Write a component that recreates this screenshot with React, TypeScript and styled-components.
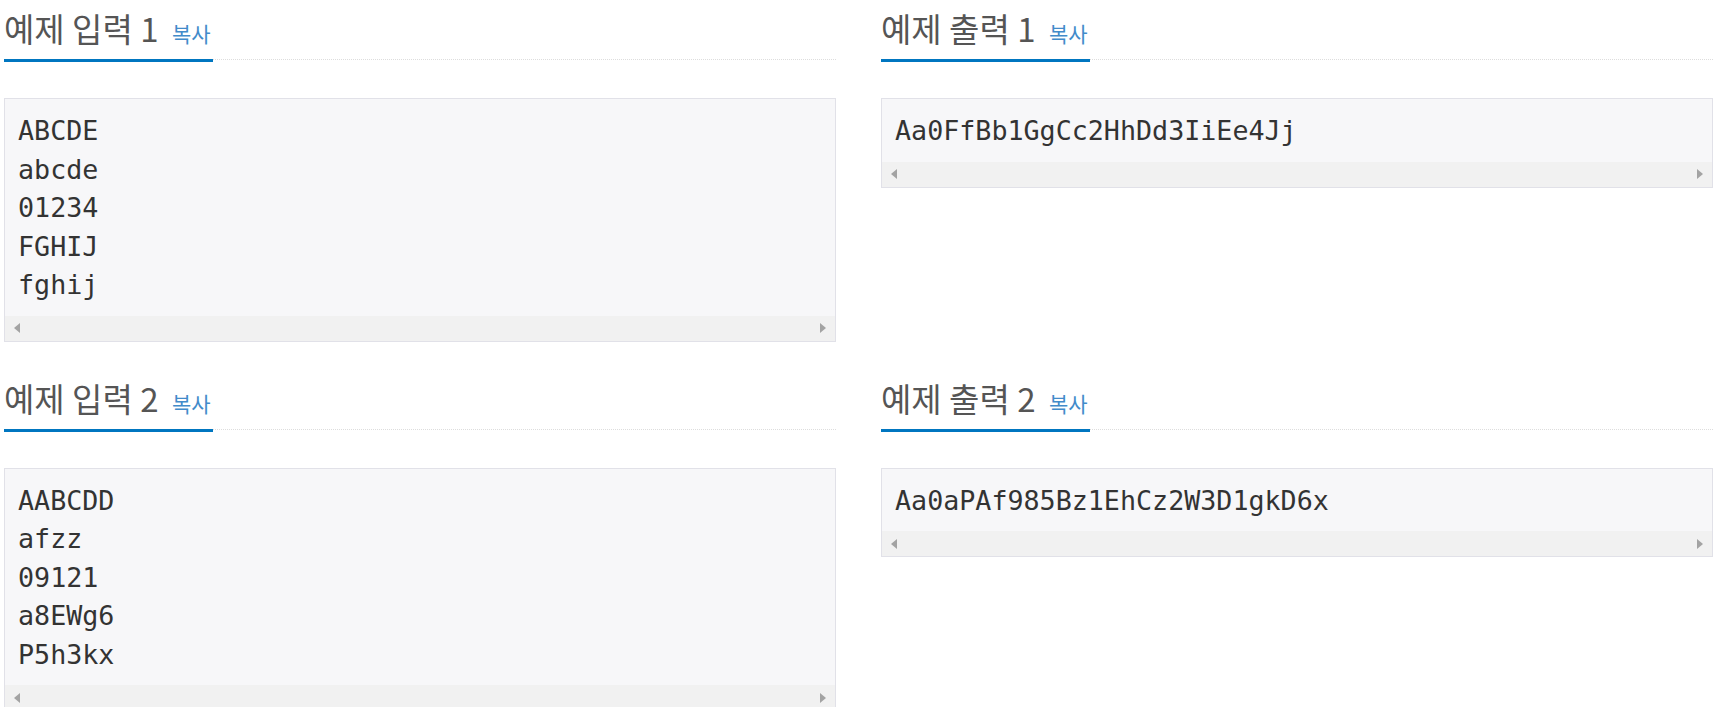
import React from "react";
import styled, { createGlobalStyle } from "styled-components";

const GlobalStyle = createGlobalStyle`
  html, body {
    margin: 0;
    padding: 0;
    background: #ffffff;
  }
  body {
    font-family: "Noto Sans CJK KR", "Noto Sans", sans-serif;
  }
`;

const Page = styled.div`
  display: grid;
  grid-template-columns: 832px 832px;
  column-gap: 45px;
  row-gap: 28px;
  padding: 0 4px;
  align-items: start;
`;

const Section = styled.section`
  display: flex;
  flex-direction: column;
  gap: 38px;
  min-width: 0;
`;

const Headline = styled.div`
  display: flex;
  align-items: flex-end;
  border-bottom: 1px dotted #dddddd;
`;

const Title = styled.h2`
  margin: 0 0 -3px;
  padding: 4px 0 7px;
  font-family: "Noto Sans CJK KR", "Noto Sans", sans-serif;
  font-size: 33px;
  font-weight: 400;
  line-height: 48px;
  color: #555555;
  border-bottom: 3px solid #0076c0;
  white-space: nowrap;
`;

const CopyButton = styled.span`
  margin-left: 6px;
  padding-right: 2px;
  font-size: 21px;
  line-height: 21px;
  color: #428bca;
  cursor: pointer;
`;

const SampleBox = styled.div`
  background: #f7f7f9;
  border: 1px solid #e1e1e8;
  overflow: hidden;
`;

const SampleText = styled.pre`
  margin: 0;
  padding: 13px 13px 11px;
  font-family: "DejaVu Sans Mono", "Liberation Mono", monospace;
  font-size: 26.7px;
  line-height: 38.5px;
  color: #333333;
  white-space: pre;
  overflow: hidden;
`;

const ScrollTrack = styled.div`
  height: 25px;
  background: #f1f1f1;
  display: flex;
  align-items: center;
  justify-content: space-between;
  padding: 0 9px;
`;

const Arrow = styled.span<{ $dir: "left" | "right" }>`
  width: 0;
  height: 0;
  border-top: 5.5px solid transparent;
  border-bottom: 5.5px solid transparent;
  ${(p) =>
    p.$dir === "left"
      ? "border-right: 6px solid #a3a3a3;"
      : "border-left: 6px solid #a3a3a3;"}
`;

type Sample = { title: string; data: string };

const samples: Sample[] = [
  { title: "예제 입력 1", data: "ABCDE\nabcde\n01234\nFGHIJ\nfghij" },
  { title: "예제 출력 1", data: "Aa0FfBb1GgCc2HhDd3IiEe4Jj" },
  { title: "예제 입력 2", data: "AABCDD\nafzz\n09121\na8EWg6\nP5h3kx" },
  { title: "예제 출력 2", data: "Aa0aPAf985Bz1EhCz2W3D1gkD6x" },
];

const SampleSection: React.FC<Sample> = ({ title, data }) => (
  <Section>
    <Headline>
      <Title>
        {title} <CopyButton>복사</CopyButton>
      </Title>
    </Headline>
    <SampleBox>
      <SampleText>{data}</SampleText>
      <ScrollTrack>
        <Arrow $dir="left" />
        <Arrow $dir="right" />
      </ScrollTrack>
    </SampleBox>
  </Section>
);

export default function App() {
  return (
    <>
      <GlobalStyle />
      <Page>
        {samples.map((s) => (
          <SampleSection key={s.title} {...s} />
        ))}
      </Page>
    </>
  );
}
